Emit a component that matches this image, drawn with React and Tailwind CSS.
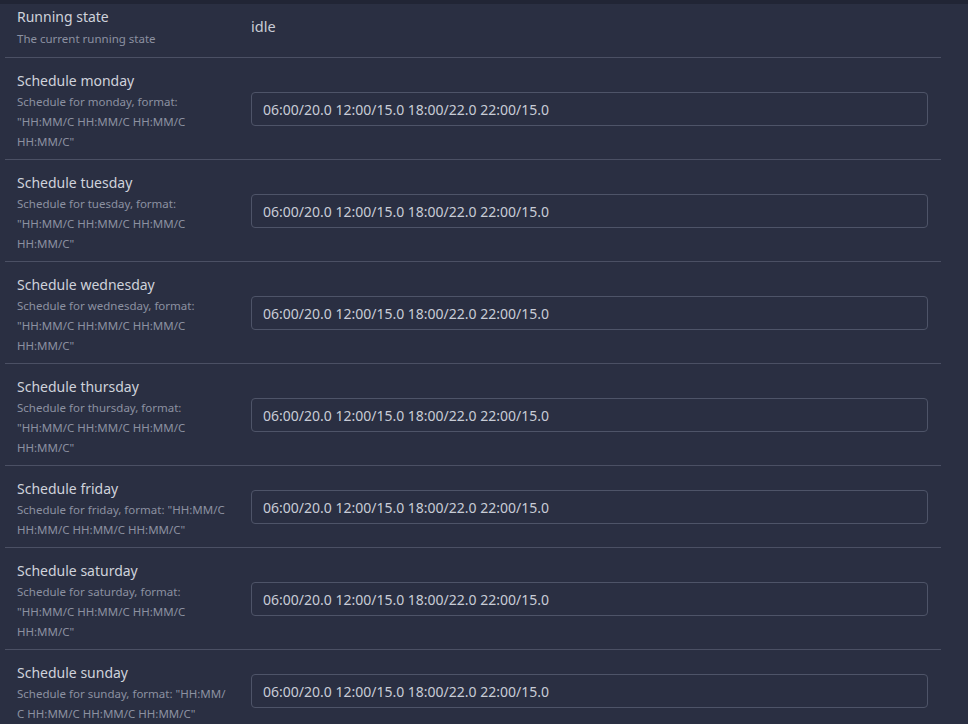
import React from "react";

const days = [
  { d: "monday", desc: 'Schedule for monday, format: "HH:MM/C HH:MM/C HH:MM/C HH:MM/C"' },
  { d: "tuesday", desc: 'Schedule for tuesday, format: "HH:MM/C HH:MM/C HH:MM/C HH:MM/C"' },
  { d: "wednesday", desc: 'Schedule for wednesday, format: "HH:MM/C HH:MM/C HH:MM/C HH:MM/C"' },
  { d: "thursday", desc: 'Schedule for thursday, format: "HH:MM/C HH:MM/C HH:MM/C HH:MM/C"' },
  { d: "friday", desc: 'Schedule for friday, format: "HH:MM/C HH:MM/C HH:MM/C HH:MM/C"' },
  { d: "saturday", desc: 'Schedule for saturday, format: "HH:MM/C HH:MM/C HH:MM/C HH:MM/C"' },
  { d: "sunday", desc: 'Schedule for sunday, format: "HH:MM/\u200BC HH:MM/C HH:MM/C HH:MM/C"' },
];

export default function App() {
  return (
    <div
      className="w-[968px] h-[724px] overflow-hidden bg-[#2a2f42]"
      style={{ fontFamily: '"Noto Sans", "Open Sans", sans-serif' }}
    >
      <div className="h-[4px] bg-[#212535]" />
      <div className="ml-[5px] w-[936px]">
        <div className="flex items-center gap-[22px] pl-3 pr-[13px] pt-[2px] pb-[8px] border-b border-[#4b5064]">
          <div className="w-[212px] shrink-0">
            <div className="text-[14px] leading-[22px] text-[#cfd2db]">Running state</div>
            <div className="text-[11.5px] leading-[21px] text-[#8c91a1]">The current running state</div>
          </div>
          <div className="text-[14.5px] text-[#c9ccd6] -mt-[2px]">idle</div>
        </div>
        {days.map((r) => (
          <div
            key={r.d}
            className="flex items-center gap-[22px] pl-3 pr-[13px] pt-2 pb-[7px] border-b border-[#4b5064]"
          >
            <div className="w-[212px] shrink-0 pt-1">
              <div className="text-[14px] leading-[22px] text-[#cfd2db]">Schedule {r.d}</div>
              <div className="text-[11.5px] leading-[20px] text-[#8c91a1] [overflow-wrap:anywhere]">{r.desc}</div>
            </div>
            <div className="flex-1 h-[34px] rounded-[4px] border border-[#4e5468] flex items-center pl-[11px] text-[14px] text-[#c8ccd6]">
              06:00/20.0 12:00/15.0 18:00/22.0 22:00/15.0
            </div>
          </div>
        ))}
      </div>
    </div>
  );
}
